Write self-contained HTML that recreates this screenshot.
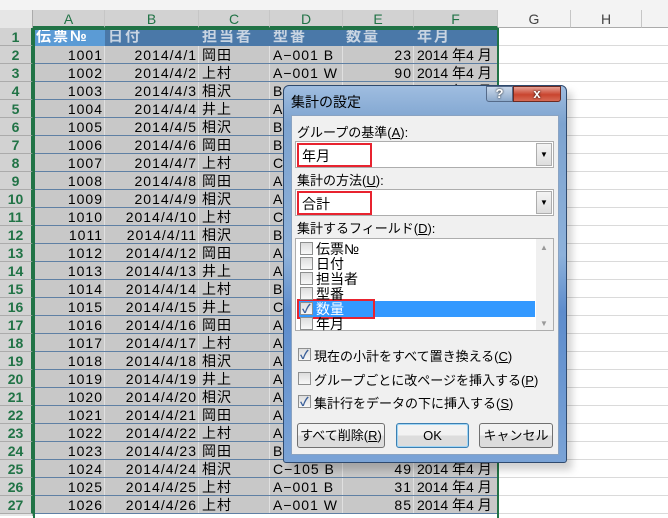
<!DOCTYPE html><html><head><meta charset="utf-8"><style>
*{margin:0;padding:0;box-sizing:border-box}
body{width:668px;height:516px;overflow:hidden;background:#fff;font-family:"Liberation Sans","Noto Sans CJK JP",sans-serif;position:relative}
.a{position:absolute}
.c{position:absolute;height:18px;line-height:18px;font-size:14px;white-space:nowrap;overflow:hidden;color:#000;letter-spacing:1px}
.r{text-align:right;padding-right:2px}
.l{padding-left:3px}
.dl{font-size:13px;color:#000;position:absolute;white-space:nowrap}
.cb{position:absolute;width:13px;height:13px;border:1px solid #8e8f8f;background:linear-gradient(#ddd,#f8f8f8)}
.chk::after{content:"✓";position:absolute;left:1px;top:-3px;font-size:12px;color:#3a5f99;font-weight:bold}
.btn{position:absolute;height:25px;border:1px solid #707070;border-radius:3px;background:linear-gradient(#f2f2f2 50%,#dcdcdc 50%);font-size:13px;text-align:center;line-height:23px}
u{text-decoration:underline}
</style></head><body>
<div class="a" style="left:0;top:0;width:668px;height:10px;background:#f3f3f3"></div>
<div class="a" style="left:0;top:10px;width:668px;height:18px;background:#f3f3f3;border-bottom:1px solid #ababab"></div>
<div class="a" style="left:0;top:10px;width:33px;height:506px;background:#e6e6e6;border-right:1px solid #ababab"></div>
<div id="g"></div>
<script>
var cols=[[33,105,'A'],[105,199,'B'],[199,270,'C'],[270,343,'D'],[343,414,'E'],[414,498,'F'],[498,571,'G'],[571,642,'H'],[642,700,'']];
var h='';
cols.forEach(function(c,i){var sel=i<6;h+='<div class="a" style="left:'+c[0]+'px;top:10px;width:'+(c[1]-c[0])+'px;height:18px;background:'+(sel?'#d2d2d2':'#f3f3f3')+';border-right:1px solid #c6c6c6;border-bottom:'+(sel?'2px solid #217346':'1px solid #ababab')+';text-align:center;font-size:14px;line-height:18px;color:'+(sel?'#217346':'#444')+'">'+c[2]+'</div>';});
var names='岡田 上村 相沢 井上 相沢 岡田 上村 岡田 相沢 上村 相沢 岡田 井上 上村 井上 岡田 上村 相沢 井上 相沢 岡田 上村 岡田 相沢 上村 上村'.split(' ');
var dl='B W B B A B B C A A C B A A B C A A A A A A A B C A A'.split(' ');
var qty=[23,90,12,45,33,21,18,40,27,36,11,50,22,14,30,25,19,42,16,28,35,20,44,49,31,85];
for(var r=1;r<=27;r++){var y=28+(r-1)*18;
h+='<div class="a" style="left:0;top:'+y+'px;width:33px;height:18px;background:#d2d2d2;border-bottom:1px solid #ababab;border-right:2px solid #217346;text-align:center;font-size:14px;font-weight:bold;line-height:18px;color:#217346">'+r+'</div>';
h+='<div class="a" style="left:498px;top:'+(y+17)+'px;width:170px;height:1px;background:#dadada"></div>';
if(r==1){h+='<div class="a" style="left:33px;top:28px;width:465px;height:18px;background:#4a78a8"></div><div class="a" style="left:35px;top:30px;width:70px;height:16px;background:#5b9bd5"></div>';
var hd=['伝票№','日付','担当者','型番','数量','年月'];
for(var i=0;i<6;i++)h+='<div class="c l" style="left:'+cols[i][0]+'px;top:'+y+'px;width:'+(cols[i][1]-cols[i][0])+'px;color:'+(i==0?'#fff':'#c8d4e2')+';font-weight:bold;font-size:15px;letter-spacing:2px">'+hd[i]+'</div>';
continue;}
var d=r-1;
h+='<div class="a" style="left:33px;top:'+y+'px;width:465px;height:18px;background:#c8c8c8;border-bottom:1px solid #5f80a4"></div>';
for(var i=0;i<5;i++)h+='<div class="a" style="left:'+(cols[i][1]-1)+'px;top:'+y+'px;width:1px;height:17px;background:#e0e0e0"></div>';
var dm=dl[d];var dv=(d==24?'C−105 B':(d==25?'A−001 B':(d==26?'A−001 W':dm+'−001 B')));
if(d==1)dv='A−001 B';if(d==2)dv='A−001 W';
var vals=[[1000+d,'r'],['2014/4/'+d,'r'],[names[d-1],'l'],[dv,'l'],[qty[d-1],'r'],['2014 年4 月','l']];
for(var i=0;i<6;i++)h+='<div class="c '+vals[i][1]+'" style="left:'+cols[i][0]+'px;top:'+y+'px;width:'+(cols[i][1]-cols[i][0])+'px;'+(i==5?'letter-spacing:0':'')+'">'+vals[i][0]+'</div>';}
h+='<div class="a" style="left:33px;top:28px;width:466px;height:490px;border:2px solid #217346;border-bottom:none"></div>';
document.getElementById('g').innerHTML=h;
</script>
<div class="a" style="left:290px;top:92px;width:282px;height:378px;background:rgba(0,0,0,.18);filter:blur(4px)"></div>
<div class="a" style="left:283px;top:85px;width:284px;height:378px;border:1px solid #2f4a6e;border-radius:6px 6px 3px 3px;background:linear-gradient(180deg,#9fbde0 0,#7da3cf 10%,#8db1da 45%,#5d8ccc 60%,#7aa3d6 100%)"></div>
<div class="dl" style="left:291px;top:92px;font-size:14px">集計の設定</div>
<div class="a" style="left:486px;top:86px;width:27px;height:16px;border:1px solid #556b8a;border-radius:0 0 0 3px;background:linear-gradient(#c9d8ea,#8eaacb);color:#fff;font-weight:bold;font-size:13px;text-align:center;line-height:14px;text-shadow:0 0 2px #000">?</div>
<div class="a" style="left:513px;top:86px;width:48px;height:16px;border:1px solid #6b2a22;border-radius:0 0 3px 0;background:linear-gradient(#e6a195,#c9452f 55%,#d66a55);color:#fff;font-weight:bold;font-size:13px;text-align:center;line-height:14px;text-shadow:0 0 2px #000">x</div>
<div class="a" style="left:291px;top:115px;width:268px;height:340px;background:#f0f0f0;border:1px solid #8aa3c2"></div>
<div class="dl" style="left:297px;top:122px">グループの基準(<u>A</u>):</div>
<div class="a" style="left:295px;top:141px;width:259px;height:27px;background:#fff;border:1px solid #adadad"></div>
<div class="a" style="left:297px;top:143px;width:75px;height:24px;border:2px solid #e8232f"></div>
<div class="dl" style="left:302px;top:146px;font-size:14px">年月</div>
<div class="a" style="left:536px;top:143px;width:16px;height:23px;border:1px solid #adadad;background:linear-gradient(#f4f4f4,#dedede);font-size:8px;text-align:center;line-height:21px">▼</div>
<div class="dl" style="left:297px;top:170px">集計の方法(<u>U</u>):</div>
<div class="a" style="left:295px;top:189px;width:259px;height:27px;background:#fff;border:1px solid #adadad"></div>
<div class="a" style="left:297px;top:191px;width:75px;height:24px;border:2px solid #e8232f"></div>
<div class="dl" style="left:302px;top:194px;font-size:14px">合計</div>
<div class="a" style="left:536px;top:191px;width:16px;height:23px;border:1px solid #adadad;background:linear-gradient(#f4f4f4,#dedede);font-size:8px;text-align:center;line-height:21px">▼</div>
<div class="dl" style="left:297px;top:218px">集計するフィールド(<u>D</u>):</div>
<div class="a" style="left:295px;top:238px;width:259px;height:93px;background:#fff;border:1px solid #adadad;overflow:hidden">
<div class="a" style="left:1px;top:62px;width:238px;height:16px;background:#3399ff"></div>
<div class="a" style="left:240px;top:0;width:18px;height:92px;background:#f0f0f0"></div>
<div class="a" style="left:244px;top:4px;font-size:8px;color:#999">▲</div>
<div class="a" style="left:244px;top:80px;font-size:8px;color:#999">▼</div>
</div>
<div class="a" style="left:297px;top:299px;width:78px;height:20px;border:2px solid #e8232f"></div>
<div id="lst"></div>
<script>
var it=['伝票№','日付','担当者','型番','数量','年月'],s='';
for(var i=0;i<6;i++){var y=241+i*15;s+='<div class="cb'+(i==4?' chk':'')+'" style="left:300px;top:'+(y+1)+'px"></div><div class="dl" style="left:316px;top:'+(y-2)+'px;font-size:14px;color:'+(i==4?'#fff':'#000')+'">'+it[i]+'</div>';}
document.getElementById('lst').innerHTML=s;
</script>
<div class="cb chk" style="left:298px;top:348px"></div><div class="dl" style="left:314px;top:346px">現在の小計をすべて置き換える(<u>C</u>)</div>
<div class="cb" style="left:298px;top:372px"></div><div class="dl" style="left:314px;top:370px">グループごとに改ページを挿入する(<u>P</u>)</div>
<div class="cb chk" style="left:298px;top:395px"></div><div class="dl" style="left:314px;top:393px">集計行をデータの下に挿入する(<u>S</u>)</div>
<div class="btn" style="left:297px;top:423px;width:88px">すべて削除(<u>R</u>)</div>
<div class="btn" style="left:396px;top:423px;width:73px;border:1px solid #3c7fb1;box-shadow:inset 0 0 0 1px #9fd5f5">OK</div>
<div class="btn" style="left:479px;top:423px;width:74px">キャンセル</div>
</body></html>
